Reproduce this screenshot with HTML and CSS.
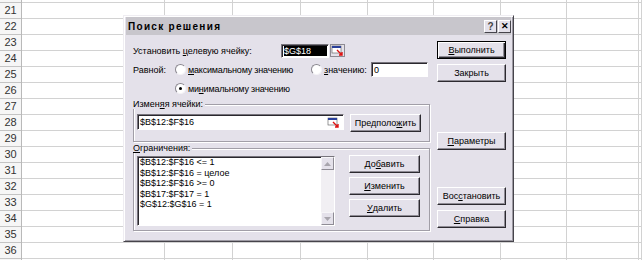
FILE: index.html
```html
<!DOCTYPE html>
<html>
<head>
<meta charset="utf-8">
<link rel="stylesheet" href="styles.css">
</head>
<body>
<div class="sheet">
  <div class="rowhead">
    <div class="rn">21</div><div class="rn">22</div><div class="rn">23</div><div class="rn">24</div>
    <div class="rn">25</div><div class="rn">26</div><div class="rn">27</div><div class="rn">28</div>
    <div class="rn">29</div><div class="rn">30</div><div class="rn">31</div><div class="rn">32</div>
    <div class="rn">33</div><div class="rn">34</div><div class="rn">35</div><div class="rn">36</div>
  </div>
  <div class="col ca"></div>
  <div class="col cb"></div>
  <div class="col cc"></div>
  <div class="col cd"></div>
  <div class="col ce"></div>
  <div class="col cf"></div>
  <div class="col cg"></div>
  <div class="col ch"></div>
  <div class="col ci"></div>
</div>

<div class="dlg">
  <div class="titlebar">
    <span class="title">Поиск решения</span>
    <span class="tbtn help">?</span>
    <span class="tbtn close">✕</span>
  </div>
  <div class="body">
    <div class="main">
      <div class="row row1">
        <span class="lbl-target">Установить <u>ц</u>елевую ячейку:</span>
        <span class="input target"><span class="sel">$G$18</span></span>
        <svg class="refbtn" width="15" height="13" viewBox="0 0 15 13">
          <rect x="0.5" y="0.5" width="14" height="12" fill="#e4e1ea" stroke="#8d8a92"/>
          <rect x="2" y="2" width="9" height="7" fill="#fff" stroke="#555" stroke-width="0.6"/>
          <rect x="2" y="2" width="9" height="2" fill="#2a3f9a"/>
          <path d="M7 6 L12 11 M9 11 H12 V8" stroke="#d11" stroke-width="1.4" fill="none"/>
        </svg>
      </div>
      <div class="row row2">
        <span class="lbl-eq">Равной:</span>
        <span class="radio"><i class="dot"></i></span>
        <span class="opt-max"><u>м</u>аксимальному значению</span>
        <span class="radio"><i class="dot"></i></span>
        <span class="opt-val"><u>з</u>начению:</span>
        <span class="input val">0</span>
      </div>
      <div class="row row3">
        <span class="radio on"><i class="dot"></i></span>
        <span class="opt-min">ми<u>н</u>имальному значению</span>
      </div>
      <fieldset class="grp grp1">
        <legend>Измен<u>я</u>я ячейки:</legend>
        <div class="grp-row">
          <span class="input cells">$B$12:$F$16
            <svg class="refbtn in" width="15" height="13" viewBox="0 0 15 13">
              <rect x="2" y="2" width="9" height="7" fill="#fff" stroke="#555" stroke-width="0.6"/>
              <rect x="2" y="2" width="9" height="2" fill="#2a3f9a"/>
              <path d="M7 6 L12 11 M9 11 H12 V8" stroke="#d11" stroke-width="1.4" fill="none"/>
            </svg>
          </span>
          <span class="btn gbtn">Предполо<u>ж</u>ить</span>
        </div>
      </fieldset>
      <fieldset class="grp grp2">
        <legend><u>О</u>граничения:</legend>
        <div class="grp-row">
          <div class="list">
            <div class="items">
              <div>$B$12:$F$16 &lt;= 1</div>
              <div>$B$12:$F$16 = целое</div>
              <div>$B$12:$F$16 &gt;= 0</div>
              <div>$B$17:$F$17 = 1</div>
              <div>$G$12:$G$16 = 1</div>
            </div>
            <div class="sbar">
              <span class="sarrow"><svg width="7" height="4" viewBox="0 0 7 4"><path d="M0 4 L3.5 0 L7 4Z" fill="#a8a5ad"/></svg></span>
              <span class="strack"></span>
              <span class="sarrow"><svg width="7" height="4" viewBox="0 0 7 4"><path d="M0 0 L3.5 4 L7 0Z" fill="#a8a5ad"/></svg></span>
            </div>
          </div>
          <div class="gbtns">
            <span class="btn gbtn">До<u>б</u>авить</span>
            <span class="btn gbtn"><u>И</u>зменить</span>
            <span class="btn gbtn"><u>У</u>далить</span>
          </div>
        </div>
      </fieldset>
    </div>
    <div class="side">
      <span class="btn sbtn default"><u>В</u>ыполнить</span>
      <span class="btn sbtn">Закрыть</span>
      <span class="btn sbtn params"><u>П</u>араметры</span>
      <span class="btn sbtn restore">Вос<u>с</u>тановить</span>
      <span class="btn sbtn"><u>С</u>правка</span>
    </div>
  </div>
</div>
</body>
</html>
```

FILE: styles.css
```css
html, body {
  margin: 0;
  padding: 0;
  background: #fff;
}
body {
  width: 642px;
  height: 260px;
  overflow: hidden;
  position: relative;
  font-family: "Liberation Sans", Arial, sans-serif;
}
.sheet {
  display: flex;
  height: 260px;
  background: repeating-linear-gradient(to bottom, #d2d2d2 0 1px, transparent 1px 16px);
  background-position: 0 2px;
}
.rowhead {
  width: 22px;
  box-sizing: border-box;
  border-right: 1px solid #b9b9b9;
  padding-top: 3px;
  background-color: #f6f6f6;
  background-image: repeating-linear-gradient(to bottom, #c4c4c4 0 1px, transparent 1px 16px);
  background-position: 0 2px;
}
.rn {
  height: 16px;
  line-height: 15px;
  font-size: 11px;
  text-align: center;
  color: #333;
}
.col {
  box-sizing: border-box;
  border-right: 1px solid #d2d2d2;
  height: 100%;
}
.ca { width: 143px; }
.cb { width: 68px; }
.cc { width: 68px; }
.cd { width: 67px; }
.ce { width: 66px; }
.cf { width: 67px; }
.cg { width: 66px; }
.ch { width: 72px; }
.ci { flex: 1; }

/* dialog */
.dlg {
  position: absolute;
  left: 123px;
  top: 15px;
  width: 391px;
  height: 227px;
  box-sizing: border-box;
  background: #e4e1ea;
  border: 1px solid;
  border-color: #efedf2 #46444b #46444b #efedf2;
  box-shadow: inset 1px 1px #fff, inset -1px -1px #9d9aa3;
  font-size: 9px;
  color: #000;
}
.titlebar {
  margin: 1px 2px 0;
  height: 18px;
  background: #c8c6cc;
  display: flex;
  align-items: center;
  padding: 0 0 0 2px;
}
.title {
  flex: 1;
  font-weight: bold;
  font-size: 10px;
  letter-spacing: 1.3px;
}
.tbtn {
  width: 13px;
  height: 13px;
  box-sizing: border-box;
  background: #e4e1ea;
  border: 1px solid;
  border-color: #fff #46444b #46444b #fff;
  display: flex;
  align-items: center;
  justify-content: center;
  font-weight: bold;
  font-size: 10px;
}
.tbtn.help { color: #444; margin-right: 1px; }
.tbtn.close { font-size: 9px; }

.body {
  display: flex;
  padding: 0 0 0 9px;
}
.main {
  width: 297px;
  padding-top: 8px;
}
.row {
  display: flex;
  align-items: center;
  height: 15px;
  white-space: nowrap;
}
.row1 { margin-bottom: 4px; }
.row2 { margin-bottom: 4px; }
.lbl-target { width: 148px; }
.input {
  box-sizing: border-box;
  background: #fff;
  border: 1px solid;
  border-color: #77747c #fff #fff #77747c;
  box-shadow: inset 1px 1px #2a282e;
  height: 14px;
  display: flex;
  align-items: center;
  padding-left: 2px;
}
.input.target { width: 48px; padding: 1px 1px 1px 2px; }
.sel {
  background: #000;
  color: #fff;
  height: 100%;
  flex: 1;
  display: flex;
  align-items: center;
}
.refbtn { display: block; margin-left: 1px; }
.lbl-eq { width: 42px; }
.radio {
  width: 11px;
  height: 11px;
  box-sizing: border-box;
  border-radius: 50%;
  background: #fff;
  border: 1px solid;
  border-color: #8a878f #f4f3f6 #f4f3f6 #8a878f;
  display: flex;
  align-items: center;
  justify-content: center;
  margin-right: 2px;
}
.radio .dot { width: 3px; height: 3px; border-radius: 50%; background: transparent; }
.radio.on .dot { background: #000; }
.opt-max { width: 123px; letter-spacing: -0.2px; }
.opt-val { width: 47px; }
.input.val { width: 57px; height: 15px; }
.row3 { padding-left: 42px; }
.opt-min { letter-spacing: -0.2px; }

.grp {
  margin: 0;
  padding: 0 0 0 3px;
  border: 1px solid #a19ea7;
  box-shadow: inset 1px 1px #fff, 1px 1px #fff;
  min-width: 0;
}
.grp legend {
  padding: 0 2px 0 0;
  margin-left: -4px;
  line-height: 9px;
  background: #e4e1ea;
}
.grp1 { margin-top: 4px; height: 42px; box-sizing: border-box; }
.grp2 { margin-top: 2px; height: 87px; box-sizing: border-box; }
.grp-row {
  display: flex;
  gap: 6px;
  align-items: flex-start;
}
.grp1 .grp-row { margin-top: 5px; }
.input.cells { width: 207px; height: 16px; padding-right: 2px; }
.input.cells .refbtn { margin-left: auto; }

.btn {
  box-sizing: border-box;
  background: #e4e1ea;
  border: 1px solid;
  border-color: #fff #2c2a30 #2c2a30 #fff;
  box-shadow: inset -1px -1px #8f8c95;
  display: flex;
  align-items: center;
  justify-content: center;
  white-space: nowrap;
  height: 18px;
}
.gbtn { width: 71px; }

.grp2 .grp-row { margin-top: 3px; }
.list {
  width: 198px;
  height: 70px;
  box-sizing: border-box;
  background: #fff;
  border: 1px solid;
  border-color: #77747c #fff #fff #77747c;
  box-shadow: inset 1px 1px #2a282e;
  display: flex;
}
.items {
  flex: 1;
  padding: 0 0 0 2px;
  line-height: 10.6px;
}
.sbar {
  width: 13px;
  display: flex;
  flex-direction: column;
  background: #f1eff3;
}
.sarrow {
  height: 13px;
  box-sizing: border-box;
  background: #e4e1ea;
  border: 1px solid;
  border-color: #f6f5f8 #8f8c95 #8f8c95 #f6f5f8;
  display: flex;
  align-items: center;
  justify-content: center;
}
.strack { flex: 1; }
.gbtns {
  display: flex;
  flex-direction: column;
  gap: 4px;
  margin-left: 8px;
  margin-top: -1px;
}

.side {
  width: 69px;
  margin-left: 7px;
  padding-top: 6px;
  display: flex;
  flex-direction: column;
}
.sbtn { width: 69px; margin-bottom: 5px; }
.sbtn.default {
  border: 1px solid #000;
  box-shadow: inset 1px 1px #fff, inset -1px -1px #2c2a30, inset -2px -2px #8f8c95;
}
.sbtn.params { margin-top: 45px; }
.sbtn.restore { margin-top: 32px; }
u { text-decoration-thickness: 1px; text-underline-offset: 1px; }
```
